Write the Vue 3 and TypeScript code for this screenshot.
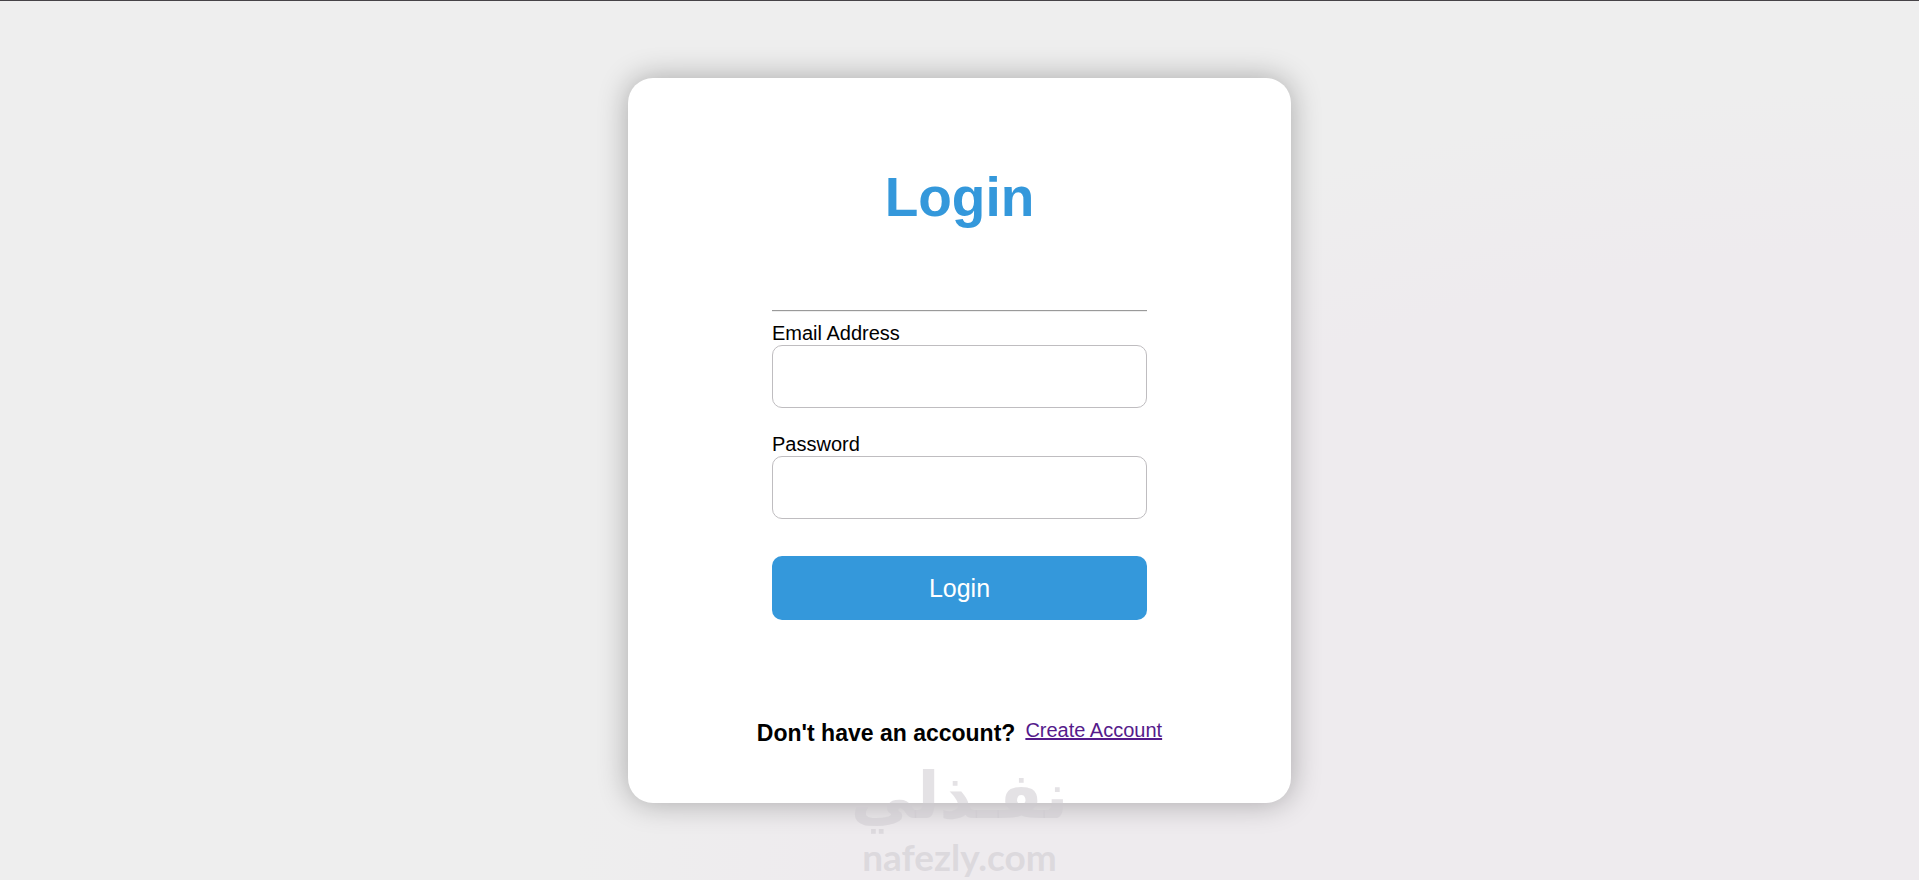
<script setup lang="ts">
import { ref } from 'vue'

interface Field {
  id: string
  label: string
  type: string
  autocomplete: string
}

const fields: Field[] = [
  { id: 'email', label: 'Email Address', type: 'email', autocomplete: 'email' },
  { id: 'password', label: 'Password', type: 'password', autocomplete: 'current-password' },
]

const values = ref<Record<string, string>>({ email: '', password: '' })
</script>

<template>
  <main class="page">
    <section class="card">
      <h1 class="title">Login</h1>
      <form class="form" @submit.prevent>
        <hr class="rule" />
        <div v-for="field in fields" :key="field.id" class="field">
          <label :for="field.id">{{ field.label }}</label>
          <input
            :id="field.id"
            v-model="values[field.id]"
            :type="field.type"
            :autocomplete="field.autocomplete"
          />
        </div>
        <button class="submit" type="submit">Login</button>
      </form>
      <div class="signup">
        <h3>Don't have an account?</h3>
        <a href="#">Create Account</a>
      </div>
    </section>
    <div class="watermark">
      <span class="mark-arabic" lang="ar" dir="rtl">نفـذلي</span>
      <span class="mark-latin">nafezly.com</span>
    </div>
  </main>
</template>

<style>
body {
  margin: 0;
}
</style>

<style scoped>
.page {
  position: relative;
  box-sizing: border-box;
  min-height: 100vh;
  padding: 77px 16px 76px;
  border-top: 1px solid #464347;
  background: radial-gradient(ellipse 70% 90% at 100% 100%, #eeebee 80%, #eeeeee 100%);
  font-family: "Liberation Sans", Arial, sans-serif;
  font-size: 20px;
  line-height: 23px;
  color: #000;
}

.card {
  box-sizing: border-box;
  display: flex;
  flex-direction: column;
  align-items: center;
  max-width: 663px;
  margin: 0 auto;
  padding: 87px 24px 55px;
  border-radius: 25px;
  background: #fff;
  box-shadow: 0 0 30px rgba(0, 0, 0, 0.3);
}

.title {
  margin: 0;
  font-size: 55px;
  line-height: 64px;
  color: #3498db;
}

.form {
  display: flex;
  flex-direction: column;
  width: 100%;
  max-width: 375px;
  margin-top: 81px;
}

.rule {
  width: 100%;
  box-sizing: border-box;
  height: 2px;
  margin: 0 0 10px;
  border: 0;
  border-top: 1px solid #9a9a9a;
  border-bottom: 1px solid #eeeeee;
}

.field {
  display: flex;
  flex-direction: column;
  margin-bottom: 25px;
}

.field input {
  box-sizing: border-box;
  width: 100%;
  height: 63px;
  padding: 0 16px;
  border: 1px solid #bfbdc0;
  border-radius: 10px;
  outline: none;
  background: transparent;
  font: inherit;
}

.submit {
  height: 64px;
  margin-top: 12px;
  padding: 0;
  border: 0;
  border-radius: 10px;
  background: #3498db;
  font-family: inherit;
  font-size: 25px;
  color: #fff;
  cursor: pointer;
}

.signup {
  display: flex;
  gap: 10px;
  margin-top: 99px;
}

.signup h3 {
  margin: 0;
  font-size: 23px;
  line-height: 29px;
}

.signup a {
  color: #551a8b;
}

.watermark {
  position: absolute;
  bottom: 0;
  left: 50%;
  display: flex;
  flex-direction: column;
  align-items: center;
  transform: translateX(-50%);
  color: rgba(205, 202, 207, 0.55);
  pointer-events: none;
  white-space: nowrap;
}

.mark-arabic {
  font-family: "DejaVu Sans", sans-serif;
  font-size: 64px;
  font-weight: 700;
  line-height: 75px;
}

.mark-latin {
  font-family: "Lato", sans-serif;
  font-size: 37px;
  font-weight: 700;
  line-height: 46px;
}
</style>
